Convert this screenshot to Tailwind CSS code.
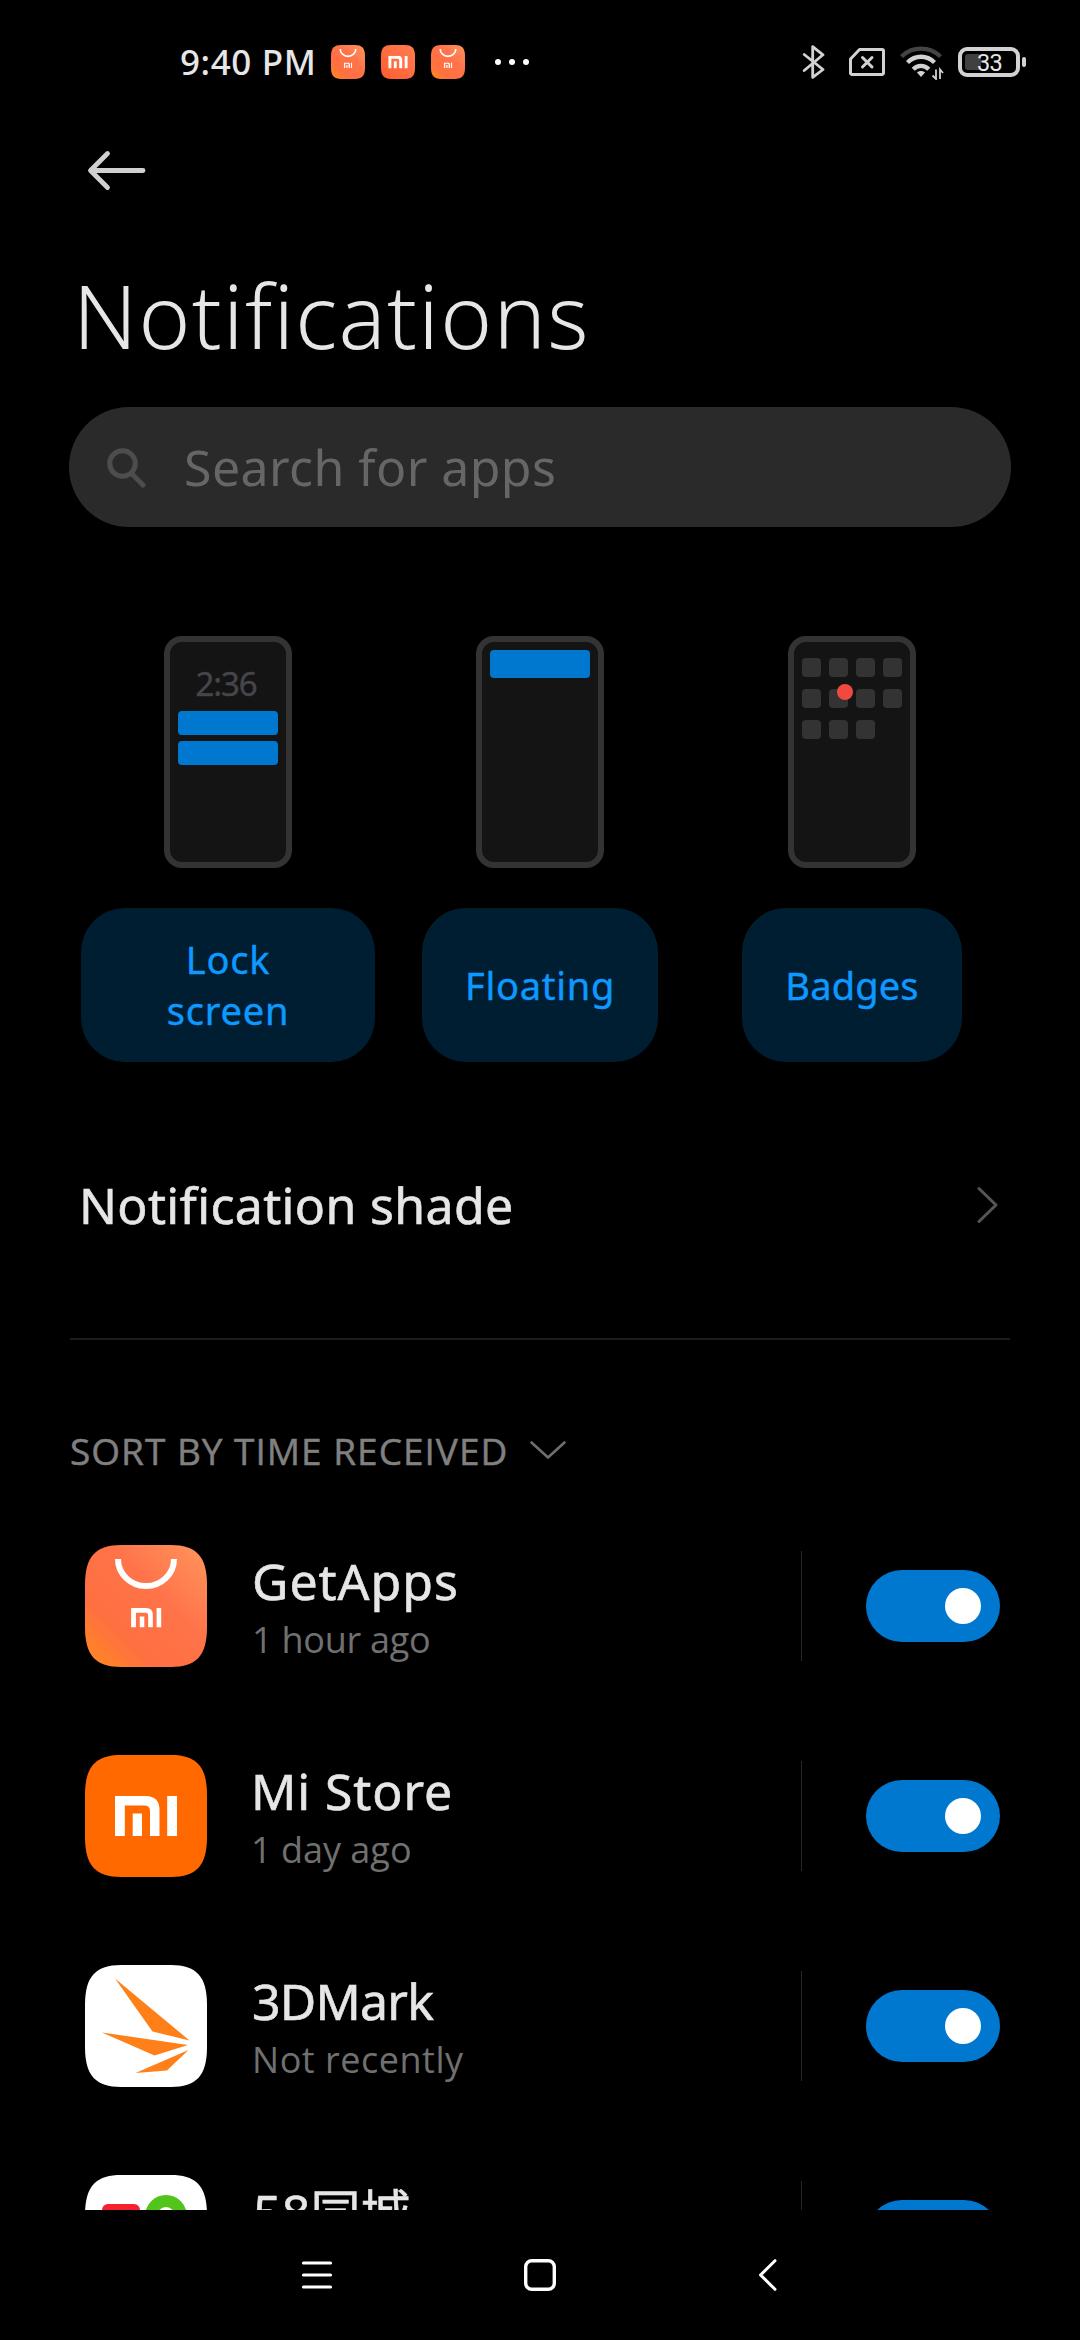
<!DOCTYPE html>
<html lang="en">
<head>
<meta charset="utf-8">
<title>Notifications</title>
<script src="https://cdn.jsdelivr.net/npm/@tailwindcss/browser@4"></script>
</head>
<body class="bg-black">
<svg class="absolute size-0">
  <defs>
    <linearGradient id="bag" x1="0" y1="1" x2="1" y2="0">
      <stop offset="0" stop-color="#ff8a1e"/><stop offset=".28" stop-color="#ff7040"/><stop offset=".6" stop-color="#ff734a"/><stop offset="1" stop-color="#ff965c"/>
    </linearGradient>
    <linearGradient id="coral" x1="0" y1="1" x2="1" y2="0">
      <stop offset="0" stop-color="#ff5c30"/><stop offset="1" stop-color="#ff7d50"/>
    </linearGradient>
    <symbol id="tile" viewBox="0 0 122 122"><path d="M0 40C0 11 11 0 36 0H86C111 0 122 11 122 40V82C122 111 111 122 86 122H36C11 122 0 111 0 82z"/></symbol>
    <symbol id="mi" viewBox="0 0 62 40"><path d="M0 40V0H30.500q14 0 14 14V40H35V15q0-5.500-5.500-5.500H9.800V40zM17.700 17.500H27V40H17.700zM52.200 0H62V40H52.200z"/></symbol>
    <symbol id="getapps" viewBox="0 0 122 122">
      <use href="#tile" width="122" height="122" fill="url(#bag)"/>
      <path d="M33 14a28 27 0 0 0 56 0" fill="none" stroke="#fff" stroke-width="6"/>
      <use href="#mi" x="46" y="63" width="30.500" height="19.500" fill="#fff"/>
    </symbol>
  </defs>
</svg>

<div class="flex h-[2340px] w-[1080px] flex-col overflow-hidden bg-black font-['Noto_Sans','Noto_Sans_CJK_SC',sans-serif] text-[#e6e6e6]">

  <!-- Status bar -->
  <header class="flex h-[124px] shrink-0 items-center justify-between pr-[53px] pl-[180px]">
    <div class="flex items-center">
      <span class="w-[151px] text-[35px] leading-[48px] font-medium tracking-[0.6px] whitespace-nowrap">9:40 PM</span>
      <div class="flex items-center gap-4">
        <svg class="size-[34px]"><use href="#getapps"/></svg>
        <svg class="size-[34px]" viewBox="0 0 122 122"><use href="#tile" width="122" height="122" fill="url(#coral)"/><use href="#mi" x="26" y="39" width="70" height="45" fill="#fff"/></svg>
        <svg class="size-[34px]"><use href="#getapps"/></svg>
      </div>
      <div class="ml-[30px] flex gap-2">
        <i class="size-1.5 rounded-full bg-white"></i><i class="size-1.5 rounded-full bg-white"></i><i class="size-1.5 rounded-full bg-white"></i>
      </div>
    </div>
    <div class="flex items-center">
      <svg class="mr-6 h-[34px] w-6" viewBox="0 0 24 34" fill="none" stroke="#d2d2d2" stroke-width="2.800" stroke-linecap="round" stroke-linejoin="round"><path d="M3.200 9.500 22 24.500 11.700 32.300V1.700L22 9.800 3.200 25.500"/></svg>
      <svg class="mr-[13px] h-7 w-9" viewBox="0 0 36 28" fill="none" stroke="#d2d2d2" stroke-width="3" stroke-linejoin="round" stroke-linecap="round"><path d="M10.500 1.500H33a1.500 1.500 0 0 1 1.500 1.500V25a1.500 1.500 0 0 1-1.500 1.500H3A1.500 1.500 0 0 1 1.500 25V11z"/><path d="m13.500 9.500 9.500 9.500m0-9.500-9.500 9.500"/></svg>
      <svg class="mr-3.5 h-9 w-[46px]" viewBox="0 0 46 36" fill="none" stroke="#d2d2d2" stroke-width="4.400">
        <path d="M3.500 12.500C14.500 2 31.500 2 42.500 12.500" stroke="#444"/>
        <path d="M9.500 18.500c8-7.600 19-7.600 27 0"/><path d="M15.200 25.200c4.500-4.400 11.100-4.400 15.600 0"/>
        <path d="M19 28.500c2-2 6-2 8 0L23 33z" fill="#d2d2d2" stroke="none"/>
        <path d="M38 25.500V35l-3.500-3.500M42 35v-9.500l3 3.500" stroke-width="1.800"/>
      </svg>
      <svg class="h-[30px] w-[69px]" viewBox="0 0 69 30"><rect x="2" y="2" width="58" height="26" rx="7" fill="none" stroke="#d2d2d2" stroke-width="4"/><rect x="64" y="10" width="4" height="10" rx="2" fill="#d2d2d2"/><rect x="7" y="7" width="16" height="16" rx="3" fill="#404040"/><text x="19" y="23.500" font-family="Roboto" font-size="23.500" letter-spacing="-0.600" fill="#e6e6e6">33</text></svg>
    </div>
  </header>

  <div class="flex h-[93px] shrink-0 items-center pl-[86px]">
    <svg class="h-11 w-[60px]" viewBox="0 0 60 44" fill="none" stroke="#d0d0d0" stroke-width="4.800" stroke-linecap="round" stroke-linejoin="round"><path d="M57 21.500H5M21.500 4.500 4.500 21.500l17 17"/></svg>
  </div>
  <h1 class="mt-12 mb-[42px] ml-[73px] text-[88px] leading-[100px] font-light tracking-[1.35px]">Notifications</h1>

  <div class="mx-[69px] flex h-[120px] shrink-0 items-center rounded-full bg-[#2a2a2a] pl-9">
    <svg class="size-11" viewBox="0 0 44 44" fill="none" stroke="#4d4d4d" stroke-width="5" stroke-linecap="round"><circle cx="17.500" cy="18.500" r="12.800"/><path d="M27 29 38 40"/></svg>
    <span class="ml-[35px] text-[50px] leading-[60px] tracking-[0.44px] text-[#666]">Search for apps</span>
  </div>

  <!-- Notification styles -->
  <section class="mx-[72px] mt-[109px] grid shrink-0 grid-cols-3 text-[38px] leading-[51px] text-[#0d99ff] [-webkit-text-stroke:0.4px]">
    <div class="flex flex-col items-center gap-10">
      <div class="flex h-[232px] w-32 flex-col items-center gap-1.5 rounded-[18px] border-6 border-[#333] bg-[#141414] pt-[22px]">
        <span class="mb-px h-10 pr-1 text-[33px] leading-10 tracking-[-1.1px] text-[#45454a]">2:36</span>
        <div class="h-6 w-[100px] rounded bg-[#0078d0]"></div>
        <div class="h-6 w-[100px] rounded bg-[#0078d0]"></div>
      </div>
      <button class="h-[154px] w-[294px] rounded-[44px] bg-[#001e31] tracking-[0.8px]">Lock<br>screen</button>
    </div>
    <div class="flex flex-col items-center gap-10">
      <div class="flex h-[232px] w-32 flex-col items-center rounded-[18px] border-6 border-[#333] bg-[#141414] pt-2">
        <div class="h-7 w-[100px] rounded bg-[#0078d0]"></div>
      </div>
      <button class="h-[154px] w-[236px] rounded-[44px] bg-[#001e31] tracking-[0.74px]">Floating</button>
    </div>
    <div class="flex flex-col items-center gap-10">
      <div class="h-[232px] w-32 rounded-[18px] border-6 border-[#333] bg-[#141414] px-2 pt-4">
        <div class="relative grid grid-cols-[repeat(4,19px)] gap-x-2 gap-y-3">
          <i class="size-[19px] rounded bg-[#333]"></i><i class="size-[19px] rounded bg-[#333]"></i><i class="size-[19px] rounded bg-[#333]"></i><i class="size-[19px] rounded bg-[#333]"></i>
          <i class="size-[19px] rounded bg-[#333]"></i><i class="size-[19px] rounded bg-[#333]"></i><i class="size-[19px] rounded bg-[#333]"></i><i class="size-[19px] rounded bg-[#333]"></i>
          <i class="size-[19px] rounded bg-[#333]"></i><i class="size-[19px] rounded bg-[#333]"></i><i class="size-[19px] rounded bg-[#333]"></i>
          <i class="absolute top-[26px] left-[35px] size-4 rounded-full bg-[#f04a40]"></i>
        </div>
      </div>
      <button class="h-[154px] w-[220px] rounded-[44px] bg-[#001e31] tracking-[0.16px]">Badges</button>
    </div>
  </section>

  <div class="mt-[90px] mb-20 flex h-[106px] shrink-0 items-center justify-between pr-20 pl-[79px]">
    <span class="text-[50px] leading-[60px] tracking-[0.35px] [-webkit-text-stroke:0.6px]">Notification shade</span>
    <svg class="h-10 w-6" viewBox="0 0 24 40" fill="none" stroke="#555" stroke-width="3" stroke-linecap="round" stroke-linejoin="round"><path d="M3 3.500 20 20 3 36.500"/></svg>
  </div>
  <div class="mx-[70px] h-0.5 shrink-0 bg-[#1c1c1c]"></div>

  <div class="mt-20 flex h-[60px] shrink-0 items-center pl-[70px]">
    <span class="pt-0.5 font-['Open_Sans'] text-[37px] leading-[48px] tracking-[1px] text-[#808080] [-webkit-text-stroke:0.5px]">SORT BY TIME RECEIVED</span>
    <svg class="ml-[21px] h-5 w-[38px]" viewBox="0 0 38 20" fill="none" stroke="#6e6e6e" stroke-width="2.600" stroke-linecap="round" stroke-linejoin="round"><path d="M2.500 2.500 19 17.500 35.500 2.500"/></svg>
  </div>

  <!-- App list -->
  <main class="mt-[21px] h-[709px] shrink-0 overflow-hidden">
    <div class="flex h-[210px] items-center pr-20 pl-[85px]">
      <svg class="size-[122px]"><use href="#getapps"/></svg>
      <div class="ml-[45px] flex-1 pt-[3px]">
        <div class="text-[50px] leading-[60px] tracking-[0.98px] [-webkit-text-stroke:0.6px]">GetApps</div>
        <div class="mt-[5px] font-['Open_Sans'] text-[36px] leading-[48px] tracking-[-0.26px] text-[#707070]">1 hour ago</div>
      </div>
      <div class="h-[110px] w-px bg-[#262626]"></div>
      <div class="ml-16 flex h-[72px] w-[134px] items-center justify-end rounded-full bg-[#0078d0] pr-[19px]"><i class="size-9 rounded-full bg-white"></i></div>
    </div>
    <div class="flex h-[210px] items-center pr-20 pl-[85px]">
      <svg class="size-[122px]" viewBox="0 0 122 122"><use href="#tile" width="122" height="122" fill="#ff6900"/><use href="#mi" x="30" y="41" width="62" height="40" fill="#fff"/></svg>
      <div class="ml-[44px] flex-1 pt-[3px]">
        <div class="text-[50px] leading-[60px] tracking-[0.91px] [-webkit-text-stroke:0.6px]">Mi Store</div>
        <div class="mt-[5px] font-['Open_Sans'] text-[36px] leading-[48px] text-[#707070]">1 day ago</div>
      </div>
      <div class="h-[110px] w-px bg-[#262626]"></div>
      <div class="ml-16 flex h-[72px] w-[134px] items-center justify-end rounded-full bg-[#0078d0] pr-[19px]"><i class="size-9 rounded-full bg-white"></i></div>
    </div>
    <div class="flex h-[210px] items-center pr-20 pl-[85px]">
      <svg class="size-[122px]" viewBox="0 0 122 122"><use href="#tile" width="122" height="122" fill="#fff"/><g fill="#ff8018"><path d="M30 13.500 104.500 75.500 67.500 66.500z"/><path d="M17 67.500 103 80 69.500 90.500z"/><path d="M103.500 85 82 105.500 50.500 108z"/></g></svg>
      <div class="ml-[45px] flex-1 pt-[3px]">
        <div class="text-[50px] leading-[60px] tracking-[-0.8px] [-webkit-text-stroke:0.6px]">3DMark</div>
        <div class="mt-[5px] font-['Open_Sans'] text-[36px] leading-[48px] tracking-[0.52px] text-[#707070]">Not recently</div>
      </div>
      <div class="h-[110px] w-px bg-[#262626]"></div>
      <div class="ml-16 flex h-[72px] w-[134px] items-center justify-end rounded-full bg-[#0078d0] pr-[19px]"><i class="size-9 rounded-full bg-white"></i></div>
    </div>
    <div class="flex h-[210px] items-center pr-20 pl-[85px]">
      <svg class="size-[122px]" viewBox="0 0 122 122"><use href="#tile" width="122" height="122" fill="#fff"/><rect x="17" y="29" width="38" height="60" rx="6" fill="#f5222d"/><circle cx="81" cy="41" r="15" fill="none" stroke="#52c41a" stroke-width="12"/></svg>
      <div class="ml-[46px] h-28 flex-1 pt-0.5">
        <div class="h-[60px] text-[50px] leading-[60px] tracking-[0.1px] [-webkit-text-stroke:0.6px]">58同城</div>
      </div>
      <div class="h-[110px] w-px bg-[#262626]"></div>
      <div class="ml-16 flex h-[72px] w-[134px] items-center justify-end rounded-full bg-[#0078d0] pr-[19px]"><i class="size-9 rounded-full bg-white"></i></div>
    </div>
  </main>

  <!-- Navigation bar -->
  <nav class="flex h-[130px] shrink-0 items-center pl-[301px]">
    <svg class="h-8 w-8" viewBox="0 0 32 32" stroke="#fff" stroke-width="3.200" stroke-linecap="round"><path d="M2.500 4H29.500M2.500 16H29.500M2.500 28H29.500"/></svg>
    <svg class="ml-[191px] h-8 w-8" viewBox="0 0 32 32" fill="none" stroke="#fff" stroke-width="3.400"><rect x="1.700" y="1.700" width="28.600" height="28.600" rx="6"/></svg>
    <svg class="ml-[202px] h-8 w-5" viewBox="0 0 20 32" fill="none" stroke="#fff" stroke-width="3" stroke-linecap="round" stroke-linejoin="round"><path d="M17 1.700 2.500 16 17 30.300"/></svg>
  </nav>
</div>
</body>
</html>
